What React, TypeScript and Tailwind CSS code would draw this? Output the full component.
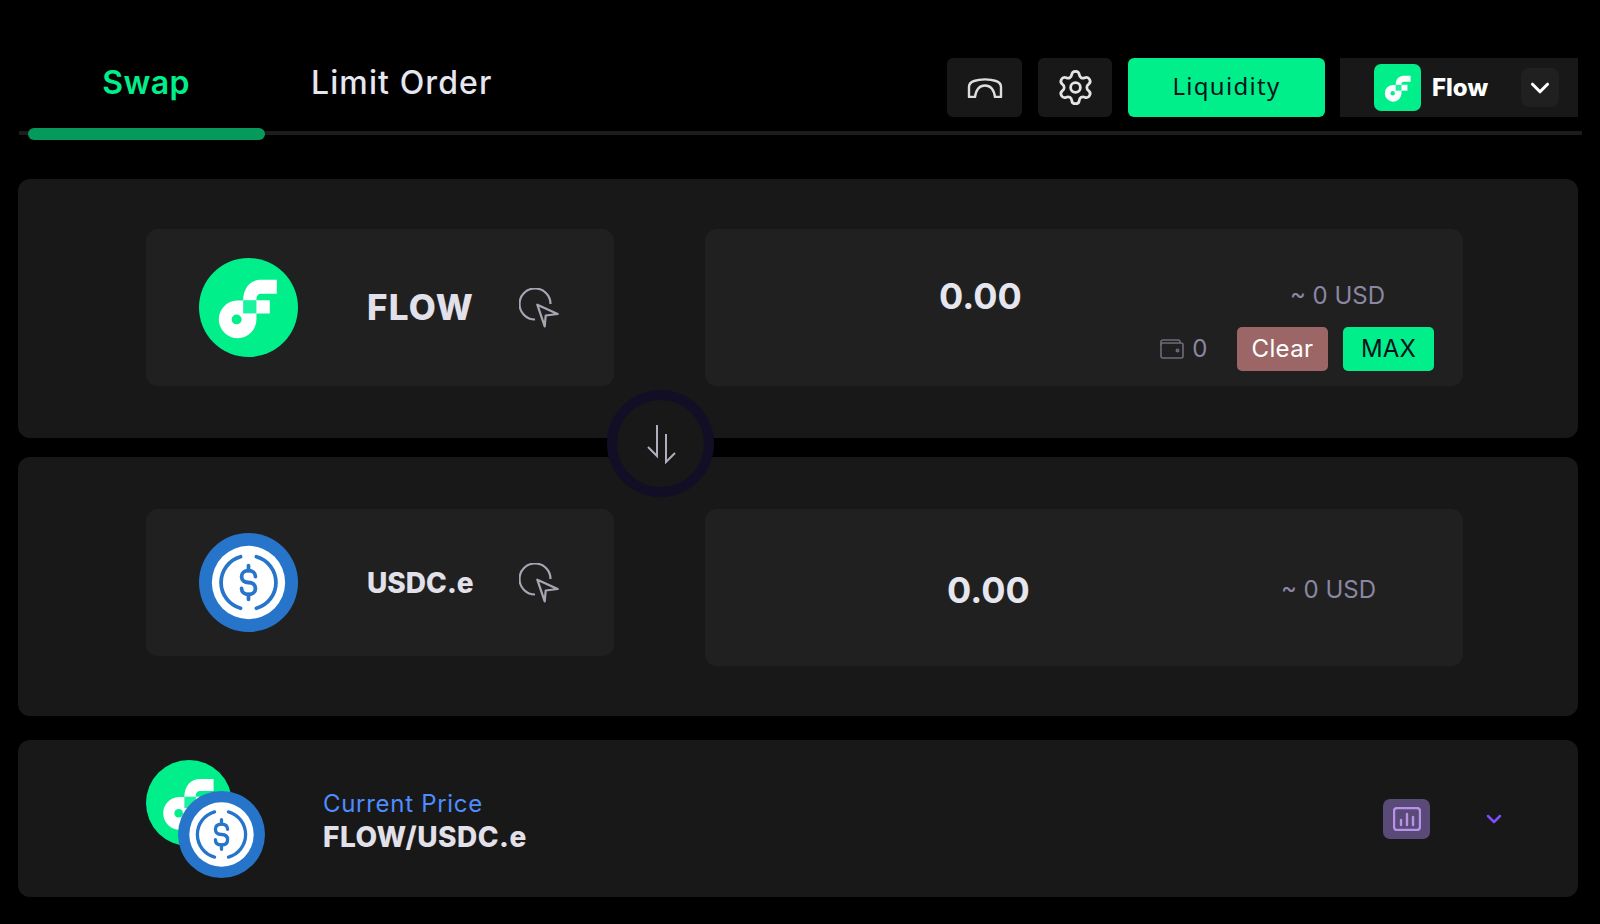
import { ChevronDown, Settings } from "lucide-react";

function FlowLogo({ className }: { className: string }) {
  return (
    <svg viewBox="0 0 100 100" className={className}>
      <circle cx="50" cy="50" r="50" fill="#00ef8b" />
      <path
        fill="#fff"
        d="M38 43a19 19 0 1 0 20 19v-6h13.5V42.6H58V41c0-3 2-5 5-5h15.6V22H63C52 22 44.6 30 44.6 43z"
      />
      <rect x="44.6" y="42.6" width="13.4" height="13.4" fill="#1cf3a0" />
      <circle cx="38" cy="62" r="5" fill="#00ef8b" />
    </svg>
  );
}

function UsdcLogo({ className }: { className: string }) {
  return (
    <svg viewBox="0 0 100 100" className={className}>
      <circle cx="50" cy="50" r="50" fill="#2775ca" />
      <circle cx="50" cy="50" r="37" fill="#fff" />
      <g fill="none" stroke="#2775ca" strokeWidth="3.8" strokeLinecap="round">
        <path d="M42 24a27 27 0 0 0 0 52" />
        <path d="M58 24a27 27 0 0 1 0 52" />
        <path d="M57 44c0-4-3-6-7-6s-7 2-7 6 3 6 7 6 7 2 7 6-3 6-7 6-7-2-7-6" />
        <path d="M50 33v5M50 62v5" />
      </g>
    </svg>
  );
}

function PickIcon() {
  return (
    <svg viewBox="0 0 40 40" className="h-[40px] w-[40px]" fill="none" stroke="#a9a6b4" strokeWidth="2.2" strokeLinejoin="round">
      <path d="M31.5 16A15.5 15.5 0 1 0 16 31.5" />
      <path d="M18.3 16.7L38.7 26l-12 1.5-1 10.8z" />
    </svg>
  );
}

function WalletIcon() {
  return (
    <svg viewBox="0 0 24 20" className="h-[20px] w-[24px]" fill="none" stroke="#6d6b7a" strokeWidth="1.6">
      <rect x="1" y="4" width="22" height="15" rx="2" />
      <path d="M1 6V3a2 2 0 0 1 2-2h15a2 2 0 0 1 2 2v1" />
      <circle cx="17.5" cy="11.5" r="1.2" />
    </svg>
  );
}

function TokenLabel({ logo, name, size }: { logo: React.ReactNode; name: string; size: string }) {
  return (
    <>
      {logo}
      <span className={`ml-[69px] font-extrabold text-[#e2e1ea] ${size}`}>{name}</span>
      <span className="ml-auto mr-[55px]">
        <PickIcon />
      </span>
    </>
  );
}

export default function App() {
  return (
    <div className="h-[924px] w-full overflow-hidden bg-black font-['Inter',sans-serif]">
      <div className="flex h-[59px] pt-0 mt-[58px] ml-[28px] mr-[22px] items-center">
        <div className="w-[236px] pb-[10px] text-center text-[32px] font-semibold tracking-[0.4px] text-[#00ef8b]">Swap</div>
        <div className="ml-[47px] pb-[10px] text-[32px] font-medium tracking-[1.1px] text-[#e6e6f0]">Limit Order</div>
        <div className="ml-auto flex items-center">
          <button className="flex h-[59px] w-[75px] items-center justify-center rounded-[6px] bg-[#181818]">
            <svg viewBox="0 0 36 20" className="h-[20px] w-[36px]" fill="none" stroke="#ddd" strokeWidth="2.4" strokeLinejoin="round">
              <path d="M2 19V9C2 6 4 4 7 3C13 .8 23 .8 29 3C32 4 34 6 34 9V19H28C27 12 24 7.5 18 7.5C12 7.5 9 12 8 19Z" />
            </svg>
          </button>
          <button className="ml-[16px] flex h-[59px] w-[74px] items-center justify-center rounded-[6px] bg-[#181818]">
            <Settings className="h-[39px] w-[39px] text-[#e4e4e4]" strokeWidth={1.7} />
          </button>
          <button className="ml-[16px] h-[59px] w-[197px] rounded-[6px] bg-[#00ef8b] pb-[3px] font-['Noto_Sans',sans-serif] text-[24px] tracking-[1.3px] text-[#06131c]">
            Liquidity
          </button>
          <div className="ml-[15px] flex h-[59px] w-[238px] items-center bg-[#181818] pl-[34px]">
            <div className="flex h-[47px] w-[47px] items-center justify-center rounded-[7px] bg-[#00ef8b]">
              <FlowLogo className="h-[44px] w-[44px]" />
            </div>
            <span className="ml-[11px] text-[24px] font-extrabold text-white">Flow</span>
            <span className="ml-auto mr-[19px] flex h-[39px] w-[38px] items-center justify-center rounded-[8px] bg-[#202020]">
              <ChevronDown className="h-[30px] w-[30px] text-white" strokeWidth={2.5} />
            </span>
          </div>
        </div>
      </div>

      <div className="relative mt-[14px] ml-[19px] mr-[18px] h-[4px] bg-[#1c1c1c]">
        <div className="absolute left-[9px] top-[-3px] h-[12px] w-[237px] rounded-full bg-[#059a5b]" />
      </div>

      <div className="relative mt-[44px] ml-[18px] mr-[22px]">
        <div className="h-[259px] rounded-[12px] bg-[#181818] pt-[50px] pl-[128px]">
          <div className="flex">
            <div className="flex h-[157px] w-[468px] items-center rounded-[12px] bg-[#202020] pl-[53px]">
              <TokenLabel logo={<FlowLogo className="h-[99px] w-[99px]" />} name="FLOW" size="text-[35px] tracking-[1.2px]" />
            </div>
            <div className="ml-[91px] h-[157px] w-[758px] rounded-[12px] bg-[#202020] pt-[45px]">
              <div className="flex h-[44px] items-center pl-[234px] pr-[78px]">
                <span className="text-[36px] font-bold text-[#e6e6ee]">0.00</span>
                <span className="ml-auto text-[24px] text-[#8a87a3]">~ 0 USD</span>
              </div>
              <div className="mt-[9px] flex h-[44px] items-center justify-end pr-[29px]">
                <WalletIcon />
                <span className="ml-[8px] text-[24px] tracking-[0.5px] text-[#8a87a3]">0</span>
                <button className="ml-[29px] h-[44px] w-[91px] rounded-[5px] bg-[#9c6666] text-[24px] tracking-[0.4px] text-white">Clear</button>
                <button className="ml-[15px] h-[44px] w-[91px] rounded-[5px] bg-[#00ef8b] text-[24px] tracking-[0.2px] text-[#06131c]">MAX</button>
              </div>
            </div>
          </div>
        </div>

        <div className="mt-[19px] h-[259px] rounded-[12px] bg-[#181818] pt-[52px] pl-[128px]">
          <div className="flex items-start">
            <div className="flex h-[147px] w-[468px] items-center rounded-[12px] bg-[#202020] pl-[53px]">
              <TokenLabel logo={<UsdcLogo className="h-[99px] w-[99px]" />} name="USDC.e" size="text-[28px]" />
            </div>
            <div className="ml-[91px] flex h-[157px] w-[758px] items-center rounded-[12px] bg-[#202020] pt-[5px] pl-[242px] pr-[87px]">
              <span className="text-[36px] font-bold text-[#e6e6ee]">0.00</span>
              <span className="ml-auto text-[24px] text-[#8a87a3]">~ 0 USD</span>
            </div>
          </div>
        </div>

        <div className="mt-[24px] flex h-[157px] items-center rounded-[12px] bg-[#181818] pl-[128px]">
          <div className="relative h-[119px] w-[119px]">
            <FlowLogo className="absolute left-0 top-[1px] h-[86px] w-[86px]" />
            <UsdcLogo className="absolute left-[32px] top-[32px] h-[87px] w-[87px]" />
          </div>
          <div className="ml-[58px] flex flex-col pt-[4px]">
            <span className="text-[24px] leading-[32px] tracking-[0.7px] text-[#4e8cff]">Current Price</span>
            <span className="text-[28px] leading-[34px] font-extrabold tracking-[0.5px] text-[#e2e1ea]">FLOW/USDC.e</span>
          </div>
          <button className="ml-auto flex h-[40px] w-[47px] items-center justify-center rounded-[7px] bg-[#5a4a78]">
            <svg viewBox="0 0 28 24" className="h-[24px] w-[28px]" fill="none" stroke="#b794e8" strokeWidth="2.4" strokeLinecap="round">
              <rect x="1" y="1" width="26" height="22" rx="3" />
              <path d="M8 18v-5M14 18V7M20 18v-8" />
            </svg>
          </button>
          <ChevronDown className="ml-[52px] mr-[72px] h-[24px] w-[24px] text-[#7c4dff]" strokeWidth={2.5} />
        </div>

        <div className="absolute left-[589px] top-[211px] flex h-[107px] w-[107px] items-center justify-center rounded-full border-[10px] border-[#120e26] bg-[#181818]">
          <svg viewBox="0 0 30 40" className="h-[40px] w-[30px]" fill="none" stroke="#b0aebc" strokeWidth="2">
            <path d="M11 1v31L2 23" />
            <path d="M20 10v28l9-9" />
          </svg>
        </div>
      </div>
    </div>
  );
}
